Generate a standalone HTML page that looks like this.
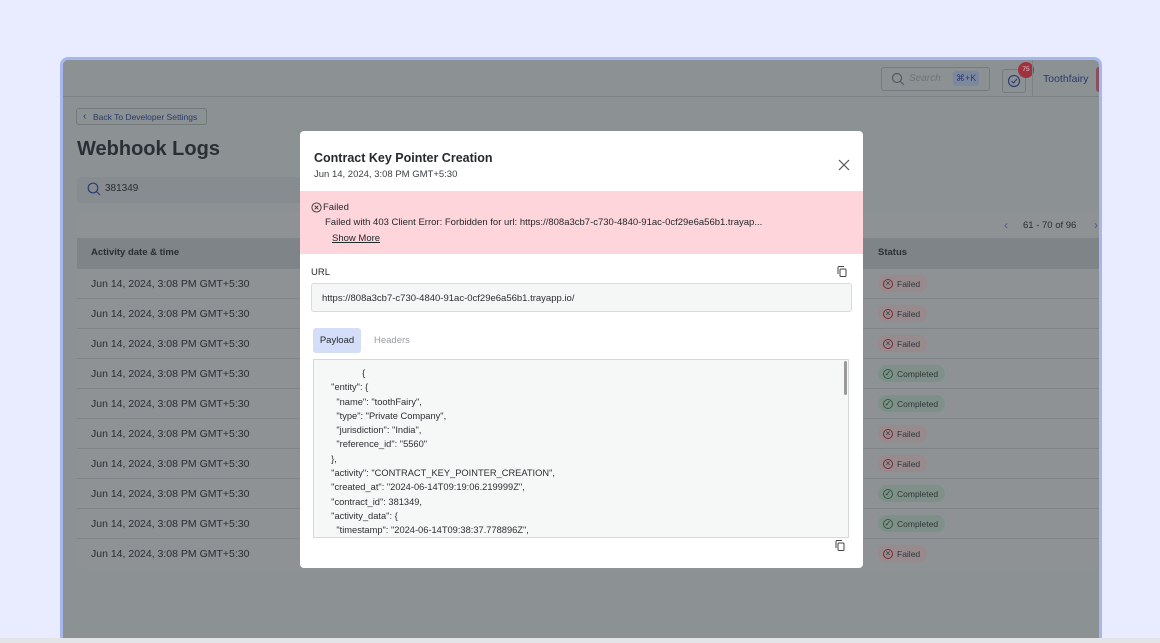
<!DOCTYPE html>
<html><head><meta charset="utf-8"><style>
*{box-sizing:border-box;margin:0;padding:0}
body{width:1160px;height:643px;overflow:hidden;background:#e8ecfe;font-family:"Liberation Sans",sans-serif;position:relative}
.frame{position:absolute;left:60px;top:57px;width:1042px;height:582px;border:3px solid #a7b6ee;border-bottom:none;border-radius:8px 8px 0 0;background:#8c9194;overflow:hidden}
.bottom{position:absolute;left:0;top:638px;width:1160px;height:5px;background:#e2e4e8}
.hdr{position:absolute;left:0;top:0;right:0;height:37px;border-bottom:1px solid #7c8185}
.t{position:absolute;white-space:nowrap}
.tbl{position:absolute;left:14px;top:151px;width:1030px;height:359px;background:#8e9295;border-radius:6px}
.th{position:absolute;left:0;top:27px;width:100%;height:30px;background:#7f8489}
.row{position:absolute;left:0;width:100%;height:30px;border-top:1px solid #7f8488;font-size:10.5px;color:#2a2e33}
.pill{position:absolute;left:801px;top:6px;height:17px;border-radius:9px;font-size:8.5px;padding:3px 6px 0 18px;color:#30363b}
.pill.f{background:#978b8e;border:1px solid #9c878b}
.pill.c{background:#7f9088;border:1px solid #7d9188}
.pill i{position:absolute;left:4px;top:3px;width:10px;height:10px;border-radius:50%;border:1px solid #7b2a35;font-style:normal;font-size:8px;line-height:8px;text-align:center}
.pill.c i{border-color:#2f5a45}
.modal{position:absolute;left:300px;top:131px;width:563px;height:437px;background:#fff;border-radius:4px;overflow:hidden}
.pay{position:absolute;left:13px;top:228px;width:536px;height:179px;border:1px solid #d6d9dc;background:#f6f7f7;font-size:9.3px;color:#2c2f33;line-height:14.3px;padding:6px 0 0 12px;white-space:pre;overflow:hidden}
</style></head><body>
<div class="frame">
 <div class="hdr">
  <div style="position:absolute;left:818px;top:7px;width:109px;height:24px;border:1px solid #767b80;border-radius:3px"></div>
  <svg style="position:absolute;left:828px;top:12px" width="14" height="14" viewBox="0 0 14 14"><circle cx="6" cy="6" r="4.5" fill="none" stroke="#555b61" stroke-width="1.2"/><line x1="9.3" y1="9.3" x2="13" y2="13" stroke="#555b61" stroke-width="1.2"/></svg>
  <div class="t" style="left:846px;top:13px;font-size:10px;font-style:italic;color:#70757a">Search</div>
  <div class="t" style="left:890px;top:11px;font-size:9px;color:#2f3f73;background:#7c889e;padding:2px 3px;border-radius:3px">⌘+K</div>
  <div style="position:absolute;left:939px;top:9px;width:24px;height:24px;border:1px solid #767b80;border-radius:3px"></div>
  <svg style="position:absolute;left:944px;top:14px" width="14" height="14" viewBox="0 0 14 14"><circle cx="7" cy="7" r="5.5" fill="none" stroke="#2f3f73" stroke-width="1.2"/><path d="M4.5 7l2 2 3.5-4" fill="none" stroke="#2f3f73" stroke-width="1.2"/></svg>
  <div class="t" style="left:955px;top:2px;width:16px;height:16px;border-radius:50%;background:#a0323f;color:#e6c8cc;font-size:6.5px;text-align:center;line-height:16px">75</div>
  <div style="position:absolute;left:969px;top:0;width:1px;height:37px;background:#7c8185"></div>
  <div class="t" style="left:980px;top:13px;font-size:10.5px;color:#2a3a6f">Toothfairy</div>
  <div style="position:absolute;left:1033px;top:7px;width:8px;height:25px;background:#8a4f5a;border-radius:3px 0 0 3px"></div>
 </div>
 <div class="t" style="left:13px;top:48px;width:131px;height:17px;border:1px solid #73787d;border-radius:3px;font-size:8.5px;color:#2b3a6a;padding:3px 0 0 16px">Back To Developer Settings</div>
 <div class="t" style="left:20px;top:51px;font-size:10px;color:#2b3a6a">‹</div>
 <div class="t" style="left:14px;top:78px;font-size:20px;font-weight:bold;color:#2a2f35">Webhook Logs</div>
 <div style="position:absolute;left:14px;top:117px;width:300px;height:26px;background:#878c90;border-radius:4px"></div>
 <svg style="position:absolute;left:24px;top:122px" width="14" height="14" viewBox="0 0 14 14"><circle cx="6" cy="6" r="4.8" fill="none" stroke="#2d3d70" stroke-width="1.2"/><line x1="9.5" y1="9.5" x2="13" y2="13" stroke="#2d3d70" stroke-width="1.2"/></svg>
 <div class="t" style="left:42px;top:123px;font-size:10px;color:#2a2e33">381349</div>
 <div class="tbl">
  <div class="t" style="left:927px;top:7px;font-size:12px;color:#4b5a85">‹</div>
  <div class="t" style="left:946px;top:9px;font-size:9.5px;color:#2a2e33">61 - 70 of 96</div>
  <div class="t" style="left:1017px;top:7px;font-size:12px;color:#4b5a85">›</div>
  <div class="th"><div class="t" style="left:14px;top:9px;font-size:9.5px;font-weight:bold;color:#2a2e33">Activity date &amp; time</div><div class="t" style="left:801px;top:9px;font-size:9.5px;font-weight:bold;color:#2a2e33">Status</div></div>
  <div class="row" style="top:57px"><div class="t" style="left:14px;top:9px">Jun 14, 2024, 3:08 PM GMT+5:30</div><div class="pill f"><i>×</i>Failed</div></div>
  <div class="row" style="top:87px"><div class="t" style="left:14px;top:9px">Jun 14, 2024, 3:08 PM GMT+5:30</div><div class="pill f"><i>×</i>Failed</div></div>
  <div class="row" style="top:117px"><div class="t" style="left:14px;top:9px">Jun 14, 2024, 3:08 PM GMT+5:30</div><div class="pill f"><i>×</i>Failed</div></div>
  <div class="row" style="top:147px"><div class="t" style="left:14px;top:9px">Jun 14, 2024, 3:08 PM GMT+5:30</div><div class="pill c"><i>✓</i>Completed</div></div>
  <div class="row" style="top:177px"><div class="t" style="left:14px;top:9px">Jun 14, 2024, 3:08 PM GMT+5:30</div><div class="pill c"><i>✓</i>Completed</div></div>
  <div class="row" style="top:207px"><div class="t" style="left:14px;top:9px">Jun 14, 2024, 3:08 PM GMT+5:30</div><div class="pill f"><i>×</i>Failed</div></div>
  <div class="row" style="top:237px"><div class="t" style="left:14px;top:9px">Jun 14, 2024, 3:08 PM GMT+5:30</div><div class="pill f"><i>×</i>Failed</div></div>
  <div class="row" style="top:267px"><div class="t" style="left:14px;top:9px">Jun 14, 2024, 3:08 PM GMT+5:30</div><div class="pill c"><i>✓</i>Completed</div></div>
  <div class="row" style="top:297px"><div class="t" style="left:14px;top:9px">Jun 14, 2024, 3:08 PM GMT+5:30</div><div class="pill c"><i>✓</i>Completed</div></div>
  <div class="row" style="top:327px"><div class="t" style="left:14px;top:9px">Jun 14, 2024, 3:08 PM GMT+5:30</div><div class="pill f"><i>×</i>Failed</div></div>
 </div>
</div>
<div class="bottom"></div>
<div class="modal">
 <div class="t" style="left:14px;top:20px;font-size:12.5px;font-weight:bold;color:#24292e">Contract Key Pointer Creation</div>
 <div class="t" style="left:14px;top:38px;font-size:9.5px;color:#3a3f44">Jun 14, 2024, 3:08 PM GMT+5:30</div>
 <svg style="position:absolute;left:538px;top:28px" width="12" height="12" viewBox="0 0 12 12"><path d="M1 1L11 11M11 1L1 11" stroke="#555" stroke-width="1.2"/></svg>
 <div style="position:absolute;left:0;top:60px;width:563px;height:63px;background:#fdd5da"></div>
 <svg style="position:absolute;left:11px;top:71px" width="11" height="11" viewBox="0 0 11 11"><circle cx="5.5" cy="5.5" r="4.6" fill="none" stroke="#333" stroke-width="0.9"/><path d="M3.7 3.7L7.3 7.3M7.3 3.7L3.7 7.3" stroke="#333" stroke-width="0.9"/></svg>
 <div class="t" style="left:23px;top:71px;font-size:9.5px;color:#24292e">Failed</div>
 <div class="t" style="left:25px;top:86px;font-size:9.5px;color:#24292e">Failed with 403 Client Error: Forbidden for url: https://808a3cb7-c730-4840-91ac-0cf29e6a56b1.trayap...</div>
 <div class="t" style="left:32px;top:102px;font-size:9.5px;color:#24292e;text-decoration:underline">Show More</div>
 <div class="t" style="left:11px;top:136px;font-size:9.5px;color:#24292e">URL</div>
 <svg style="position:absolute;left:537px;top:135px" width="10" height="11" viewBox="0 0 10 11"><rect x="3" y="3" width="6" height="7.5" rx="1" fill="none" stroke="#444" stroke-width="1"/><path d="M1 8V1.5a1 1 0 0 1 1-1h5" fill="none" stroke="#444" stroke-width="1"/></svg>
 <div style="position:absolute;left:11px;top:152px;width:541px;height:29px;border:1px solid #d8dbde;border-radius:3px;background:#f5f6f6;font-size:9.5px;color:#2c2f33;padding:9px 0 0 10px">https://808a3cb7-c730-4840-91ac-0cf29e6a56b1.trayapp.io/</div>
 <div class="t" style="left:13px;top:197px;width:48px;height:25px;background:#d5def9;border-radius:3px;font-size:9.5px;color:#24292e;text-align:center;line-height:25px">Payload</div>
 <div class="t" style="left:74px;top:204px;font-size:9.5px;color:#9a9ea3">Headers</div>
 <div class="pay">              {
  "entity": {
    "name": "toothFairy",
    "type": "Private Company",
    "jurisdiction": "India",
    "reference_id": "5560"
  },
  "activity": "CONTRACT_KEY_POINTER_CREATION",
  "created_at": "2024-06-14T09:19:06.219999Z",
  "contract_id": 381349,
  "activity_data": {
    "timestamp": "2024-06-14T09:38:37.778896Z",</div>
 <div style="position:absolute;left:544px;top:230px;width:3px;height:34px;background:#9a9a9a;border-radius:2px"></div>
 <svg style="position:absolute;left:535px;top:409px" width="10" height="11" viewBox="0 0 10 11"><rect x="3" y="3" width="6" height="7.5" rx="1" fill="none" stroke="#444" stroke-width="1"/><path d="M1 8V1.5a1 1 0 0 1 1-1h5" fill="none" stroke="#444" stroke-width="1"/></svg>
</div>
</body></html>
